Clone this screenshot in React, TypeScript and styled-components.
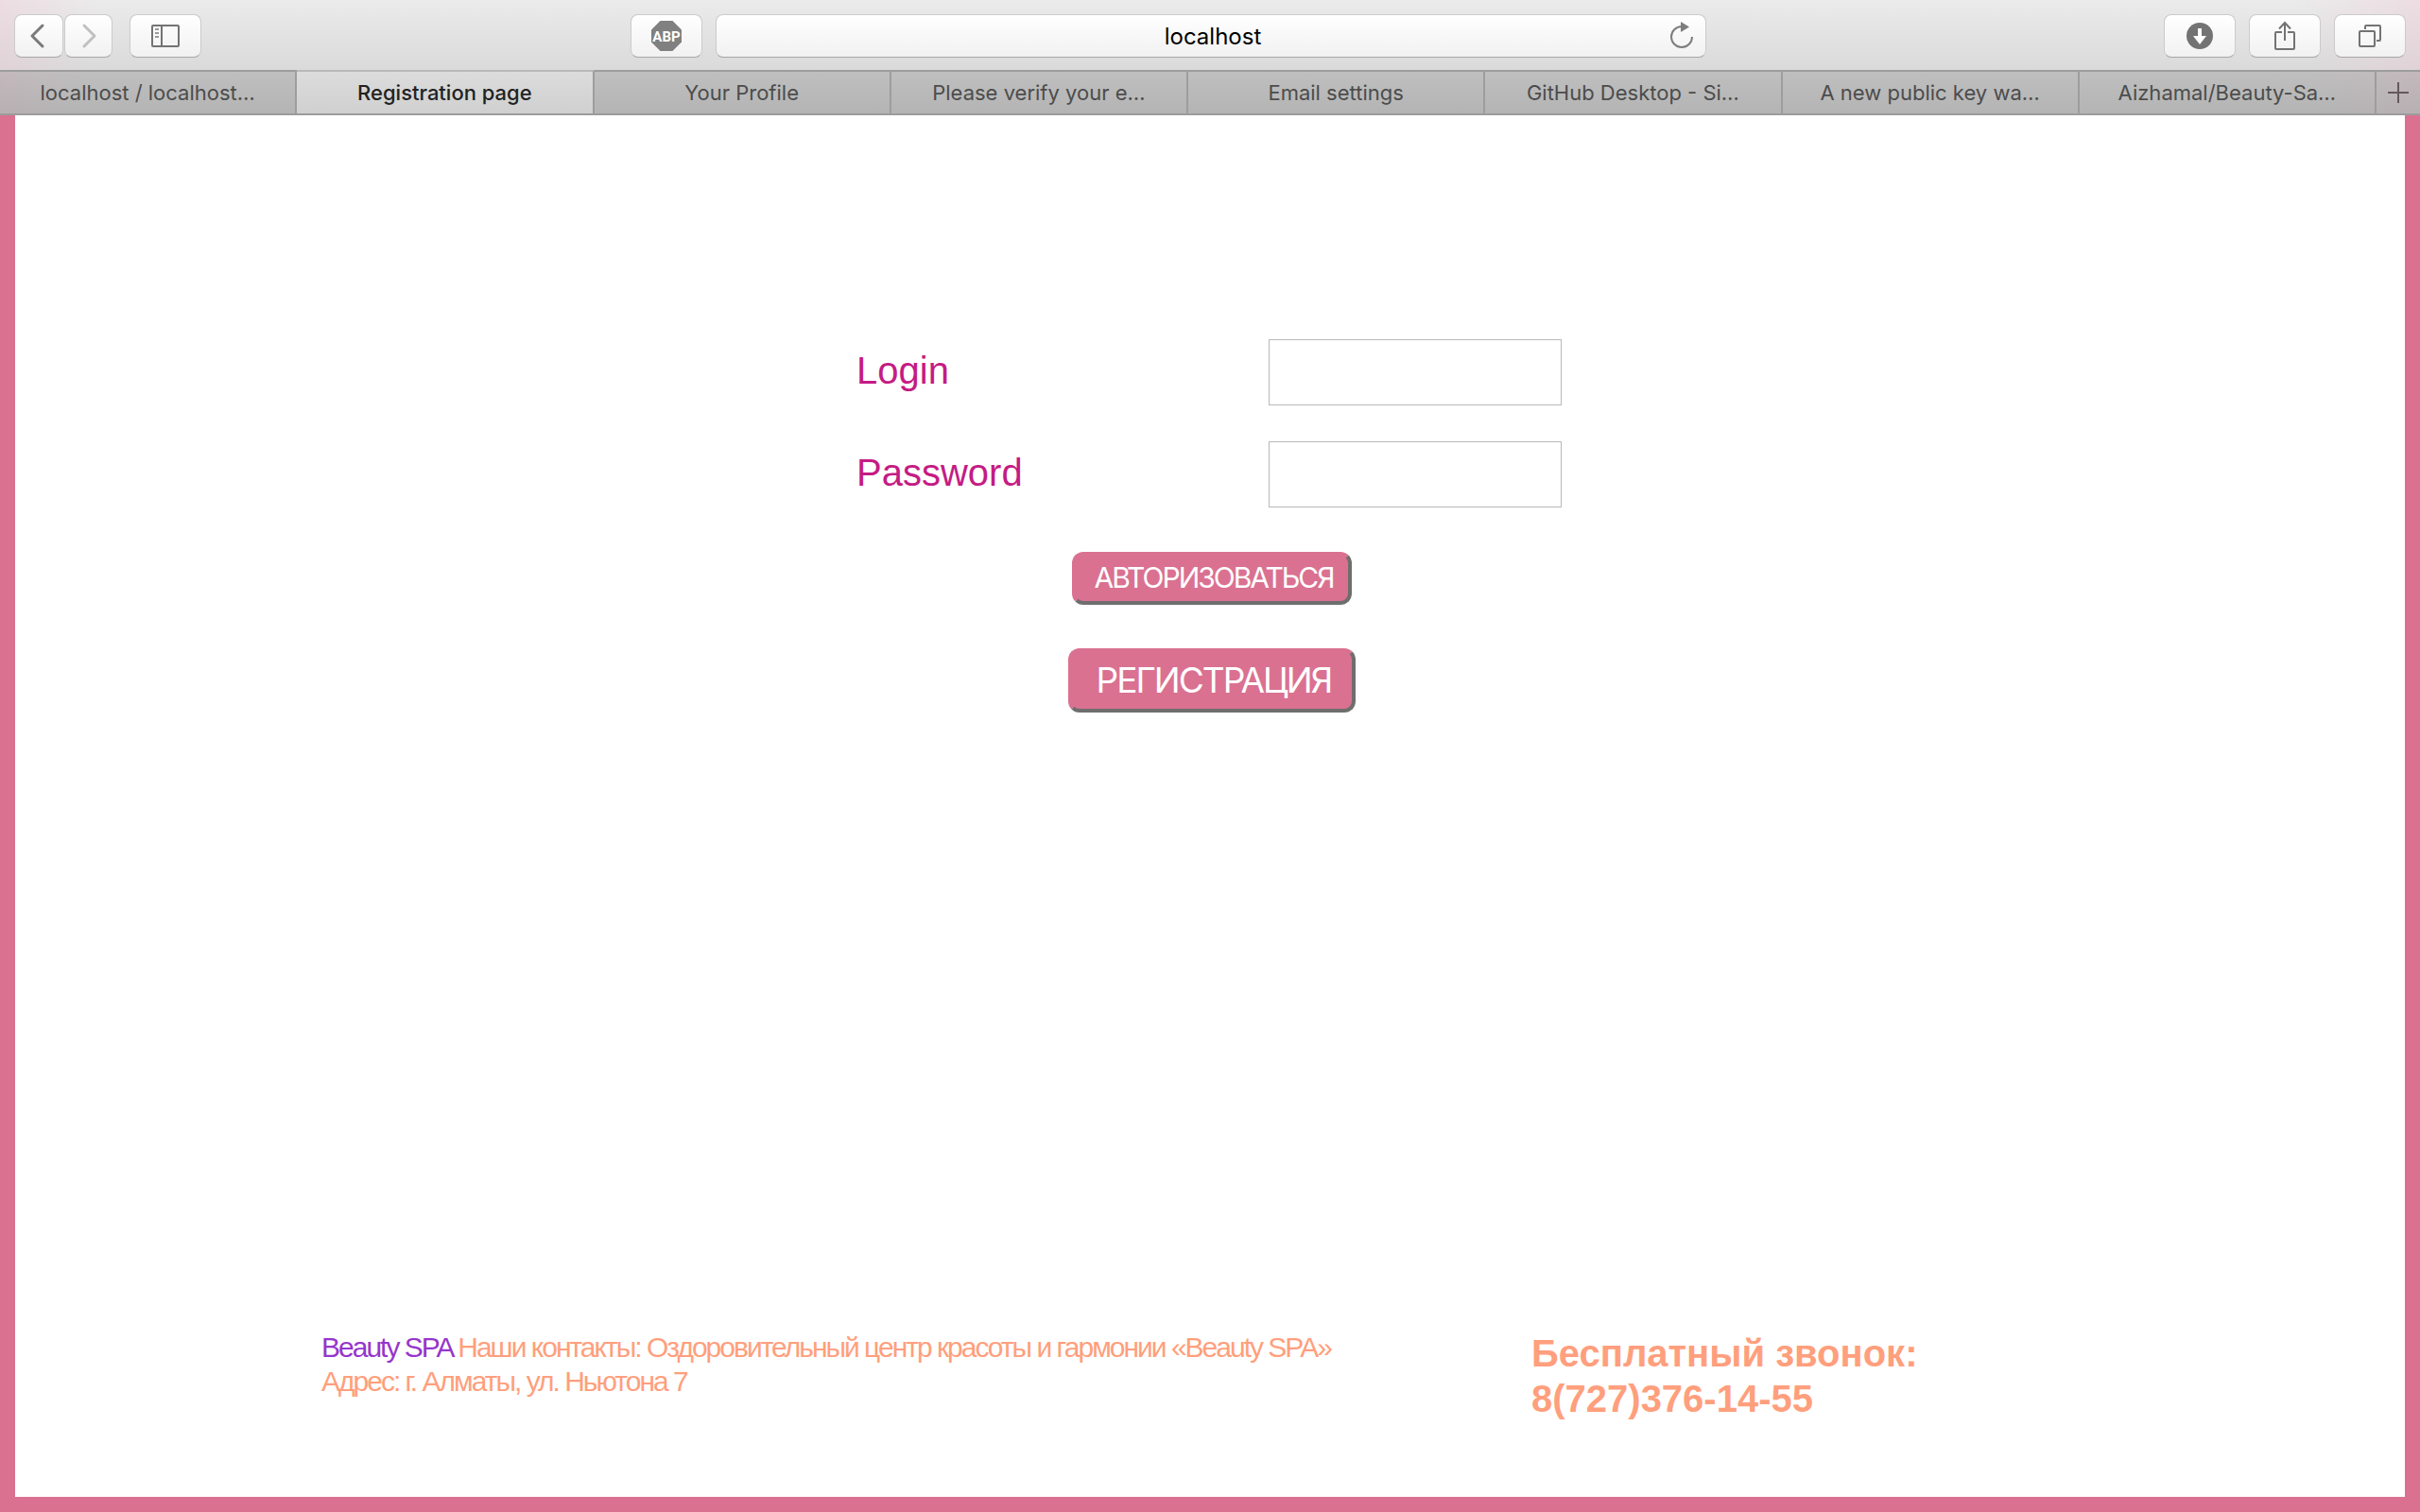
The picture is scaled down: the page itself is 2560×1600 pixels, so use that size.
import React from "react";
import styled, { createGlobalStyle } from "styled-components";

const pink = "#da7191";
const salmon = "#ff9f7d";
const uiFont = `Inter, Roboto, "Noto Sans", sans-serif`;
const pageFont = `"Liberation Sans", Arial, sans-serif`;

const GlobalStyle = createGlobalStyle`
  * { box-sizing: border-box; }
  body { margin: 0; background: ${pink}; }
`;

const Window = styled.div`
  display: flex;
  flex-direction: column;
  min-height: 100vh;
`;

const Chrome = styled.header`
  font-family: ${uiFont};
  background:
    linear-gradient(100deg, rgba(240, 190, 205, 0.3), rgba(240, 190, 205, 0) 4%),
    linear-gradient(260deg, rgba(240, 190, 205, 0.3), rgba(240, 190, 205, 0) 5%),
    linear-gradient(#ebebeb, #dadada 74px);
`;

const Toolbar = styled.div`
  display: grid;
  grid-template-columns: 652fr 1138fr 740fr;
  padding: 15px 15px 13px;
`;

const Group = styled.div<{ $gap: number; $end?: boolean }>`
  display: flex;
  gap: ${(p) => p.$gap}px;
  justify-content: ${(p) => (p.$end ? "flex-end" : "flex-start")};
`;

const ToolButton = styled.button<{ $width?: number }>`
  display: flex;
  align-items: center;
  justify-content: center;
  flex: none;
  width: ${(p) => p.$width ?? 76}px;
  height: 46px;
  padding: 0;
  border: 1px solid #cbcbcb;
  border-bottom-color: #a6a6a6;
  border-radius: 8px;
  background: linear-gradient(#ffffff, #f1f1f1);
`;

const AddressBar = styled.div`
  display: flex;
  align-items: center;
  flex: 1;
  height: 46px;
  padding: 0 12px 0 42px;
  border: 1px solid #cbcbcb;
  border-bottom-color: #a6a6a6;
  border-radius: 8px;
  background: linear-gradient(#ffffff, #f1f1f1);
`;

const AddressInput = styled.input`
  flex: 1;
  min-width: 0;
  padding: 2px 0 0;
  border: 0;
  outline: 0;
  background: none;
  color: #000;
  font: 400 24px/32px ${uiFont};
  text-align: center;
`;

const ReloadButton = styled.button`
  display: flex;
  padding: 0;
  border: 0;
  background: none;
`;

const TabBar = styled.nav`
  display: flex;
  height: 48px;
  border-bottom: 2px solid #9c9c9c;
`;

const Tab = styled.button<{ $active?: boolean }>`
  flex: 1;
  min-width: 0;
  padding: 0 12px;
  border: 0;
  border-top: 2px solid ${(p) => (p.$active ? "#b9b9b9" : "#9d9d9d")};
  border-right: 2px solid #9d9d9d;
  background: ${(p) =>
    p.$active
      ? "linear-gradient(#dcdcdc, #d0d0d0)"
      : "linear-gradient(rgba(100, 100, 100, 0.23), rgba(100, 100, 100, 0.32))"};
  color: ${(p) => (p.$active ? "#222" : "#4c4c4c")};
  font: ${(p) => (p.$active ? 500 : 400)} 22px/28px ${uiFont};
  white-space: nowrap;
  overflow: hidden;
  text-overflow: ellipsis;
`;

const NewTab = styled.button`
  display: flex;
  align-items: center;
  justify-content: center;
  width: 46px;
  padding: 0;
  border: 0;
  border-top: 2px solid #9d9d9d;
  background: linear-gradient(rgba(100, 100, 100, 0.23), rgba(100, 100, 100, 0.32));
`;

const Page = styled.div`
  display: flex;
  flex: 1;
  flex-direction: column;
  justify-content: space-between;
  border: solid ${pink};
  border-width: 0 16px 16px;
  background: #fff;
  font-family: ${pageFont};
`;

const LoginForm = styled.form`
  display: flex;
  flex-direction: column;
  align-items: center;
  padding-top: 237px;
`;

const Field = styled.div`
  display: flex;
  align-items: center;
  justify-content: space-between;
  width: 746px;
  margin: 0 2px 38px 0;
`;

const Label = styled.label`
  padding-bottom: 4px;
  color: #c51b84;
  font-size: 40px;
  line-height: 48px;
`;

const TextInput = styled.input`
  width: 310px;
  height: 70px;
  padding: 0 12px;
  border: 1px solid #b9b9b9;
  background: #fff;
  font: 32px ${pageFont};
`;

const Actions = styled.div`
  display: flex;
  flex-direction: column;
  align-items: center;
  gap: 46px;
  padding: 9px 0 0 4px;
`;

const ActionButton = styled.button<{ $large?: boolean }>`
  width: ${(p) => (p.$large ? 304 : 296)}px;
  height: ${(p) => (p.$large ? 68 : 56)}px;
  padding: 0 0 2px 4px;
  border: 4px outset;
  border-color: ${pink} #6e6e6e #6e6e6e ${pink};
  border-style: solid;
  border-radius: 12px;
  background: ${pink};
  color: #fff;
  font-family: ${uiFont};
  font-size: ${(p) => (p.$large ? 37 : 30)}px;
  line-height: 1;
  letter-spacing: -2px;
  white-space: nowrap;
`;

const Footer = styled.footer`
  display: grid;
  grid-template-columns: 1280fr 600fr;
  padding: 40px 324px 80px;
  color: ${salmon};
`;

const Contacts = styled.p`
  margin: 0;
  font-size: 30px;
  line-height: 36px;
  letter-spacing: -2px;
`;

const Brand = styled.span`
  color: #9636cc;
`;

const Phone = styled.p`
  margin: 0;
  font-size: 40px;
  font-weight: 700;
  line-height: 48px;
`;

const tabs = [
  "localhost / localhost…",
  "Registration page",
  "Your Profile",
  "Please verify your e…",
  "Email settings",
  "GitHub Desktop - Si…",
  "A new public key wa…",
  "Aizhamal/Beauty-Sa…",
];

const Chevron = ({ forward }: { forward?: boolean }) => (
  <svg width="20" height="28" viewBox="0 0 20 28" fill="none" strokeWidth="3" strokeLinecap="round" strokeLinejoin="round">
    {forward ? <path d="M5 3l11 11L5 25" stroke="#c0c0c0" /> : <path d="M14 3L3 14l11 11" stroke="#7a7a7a" />}
  </svg>
);

const SidebarIcon = () => (
  <svg width="30" height="24" viewBox="0 0 30 24" fill="none" stroke="#737373" strokeWidth="2">
    <rect x="1" y="1" width="28" height="22" rx="1" />
    <path d="M11 1v22" />
    <path d="M4 5h4M4 9h4M4 13h4" stroke="#9a9a9a" />
  </svg>
);

const AdblockIcon = () => (
  <svg width="32" height="32" viewBox="0 0 32 32">
    <path d="M9.500 0h13L32 9.500v13L22.500 32h-13L0 22.500v-13z" fill="#808080" />
    <text x="16" y="22" fill="#fff" fontFamily="Roboto, Open Sans, sans-serif" fontSize="15" fontWeight="700" textAnchor="middle">
      ABP
    </text>
  </svg>
);

const ReloadIcon = () => (
  <svg width="26" height="30" viewBox="0 0 26 30">
    <path d="M24 16a11 11 0 1 1-11-11" fill="none" stroke="#7d7d7d" strokeWidth="2" />
    <path d="M12 0l9 5.500-9 5.500z" fill="#7d7d7d" />
  </svg>
);

const DownloadIcon = () => (
  <svg width="28" height="28" viewBox="0 0 28 28">
    <circle cx="14" cy="14" r="14" fill="#737373" />
    <path d="M12 6h4v8h5l-7 9-7-9h5z" fill="#fff" />
  </svg>
);

const ShareIcon = () => (
  <svg width="24" height="32" viewBox="0 0 24 32" fill="none" stroke="#737373" strokeWidth="2">
    <path d="M9 12H3a1 1 0 0 0-1 1v16a1 1 0 0 0 1 1h18a1 1 0 0 0 1-1V13a1 1 0 0 0-1-1h-6" />
    <path d="M12 21V2M6 8.500L12 2l6 6.500" />
  </svg>
);

const TabsIcon = () => (
  <svg width="24" height="24" viewBox="0 0 24 24" fill="none" stroke="#737373" strokeWidth="2">
    <rect x="1" y="7" width="16" height="16" rx="1" />
    <path d="M7 5V2a1 1 0 0 1 1-1h14a1 1 0 0 1 1 1v14a1 1 0 0 1-1 1h-3" />
  </svg>
);

const PlusIcon = () => (
  <svg width="22" height="22" viewBox="0 0 22 22" stroke="#65585c" strokeWidth="2">
    <path d="M11 0v22M0 11h22" />
  </svg>
);

export default function App() {
  return (
    <Window>
      <GlobalStyle />
      <Chrome>
        <Toolbar>
          <Group $gap={18}>
            <Group $gap={1}>
              <ToolButton $width={52} type="button" aria-label="Back">
                <Chevron />
              </ToolButton>
              <ToolButton $width={51} type="button" aria-label="Forward">
                <Chevron forward />
              </ToolButton>
            </Group>
            <ToolButton type="button" aria-label="Sidebar">
              <SidebarIcon />
            </ToolButton>
          </Group>
          <Group $gap={14}>
            <ToolButton type="button" aria-label="Adblock Plus">
              <AdblockIcon />
            </ToolButton>
            <AddressBar>
              <AddressInput aria-label="Address" defaultValue="localhost" />
              <ReloadButton type="button" aria-label="Reload">
                <ReloadIcon />
              </ReloadButton>
            </AddressBar>
          </Group>
          <Group $gap={14} $end>
            <ToolButton type="button" aria-label="Downloads">
              <DownloadIcon />
            </ToolButton>
            <ToolButton type="button" aria-label="Share">
              <ShareIcon />
            </ToolButton>
            <ToolButton type="button" aria-label="Show tabs">
              <TabsIcon />
            </ToolButton>
          </Group>
        </Toolbar>
        <TabBar>
          {tabs.map((title, i) => (
            <Tab key={title} type="button" $active={i === 1}>
              {title}
            </Tab>
          ))}
          <NewTab type="button" aria-label="New tab">
            <PlusIcon />
          </NewTab>
        </TabBar>
      </Chrome>
      <Page>
        <LoginForm onSubmit={(e) => e.preventDefault()}>
          <Field>
            <Label htmlFor="login">Login</Label>
            <TextInput id="login" type="text" />
          </Field>
          <Field>
            <Label htmlFor="password">Password</Label>
            <TextInput id="password" type="password" />
          </Field>
          <Actions>
            <ActionButton type="submit">АВТОРИЗОВАТЬСЯ</ActionButton>
            <ActionButton type="button" $large>
              РЕГИСТРАЦИЯ
            </ActionButton>
          </Actions>
        </LoginForm>
        <Footer>
          <Contacts>
            <Brand>Beauty SPA</Brand> Наши контакты: Оздоровительный центр красоты и гармонии «Beauty SPA»
            <br />
            Адрес: г. Алматы, ул. Ньютона 7
          </Contacts>
          <Phone>
            Бесплатный звонок:
            <br />
            8(727)376-14-55
          </Phone>
        </Footer>
      </Page>
    </Window>
  );
}
